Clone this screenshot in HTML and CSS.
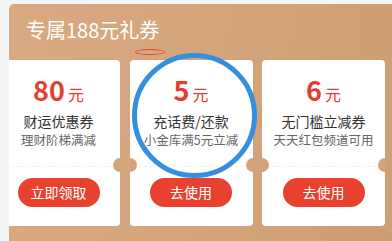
FILE: index.html
```html
<!DOCTYPE html>
<html lang="zh">
<head>
<meta charset="utf-8">
<link rel="stylesheet" href="styles.css">
</head>
<body>
<div class="page">
  <div class="panel">
    <div class="title">专属188元礼券</div>
    <div class="cards">
      <div class="card">
        <div class="amount"><span class="num">80</span><span class="unit">元</span></div>
        <div class="name">财运优惠券</div>
        <div class="desc">理财阶梯满减</div>
        <div class="divider"></div>
        <div class="btn">立即领取</div>
      </div>
      <div class="card">
        <div class="amount"><span class="num">5</span><span class="unit">元</span></div>
        <div class="name">充话费/还款</div>
        <div class="desc">小金库满5元立减</div>
        <div class="divider"></div>
        <div class="btn">去使用</div>
      </div>
      <div class="card">
        <div class="amount"><span class="num">6</span><span class="unit">元</span></div>
        <div class="name">无门槛立减券</div>
        <div class="desc">天天红包频道可用</div>
        <div class="divider"></div>
        <div class="btn">去使用</div>
      </div>
    </div>
  </div>
</div>
<div class="mark-red"></div>
<div class="mark-blue"></div>
</body>
</html>
```

FILE: styles.css
```css
html, body {
  margin: 0;
  padding: 0;
}
body {
  background: #f4f5f7;
  font-family: "Noto Sans CJK SC", "Noto Sans", sans-serif;
  width: 392px;
  height: 241px;
  overflow: hidden;
  position: relative;
}
.page {
  padding: 4px 0 0 9px;
}
.panel {
  background: linear-gradient(100deg, #d9aa82 0%, #d4a47b 50%, #cd9d74 100%);
  border-radius: 5px 0 0 0;
  height: 260px;
  overflow: hidden;
}
.title {
  color: #fff;
  font-size: 20px;
  line-height: 28px;
  padding: 12px 0 0 17px;
}
.cards {
  display: flex;
  gap: 9.5px;
  margin: 16px 0 0 -12px;
}
.card {
  flex: none;
  width: 123px;
  height: 166px;
  background: #fff;
  border-radius: 4px;
  position: relative;
  overflow: hidden;
  display: flex;
  flex-direction: column;
  align-items: center;
}
.card::before,
.card::after {
  content: "";
  position: absolute;
  top: 98px;
  width: 14px;
  height: 14px;
  border-radius: 50%;
  background: #d3a37a;
}
.card::before { left: -7px; }
.card::after { right: -7px; }
.amount {
  margin-top: 16px;
  height: 28px;
  display: flex;
  align-items: baseline;
  color: #e53d2e;
  line-height: 28px;
}
.num {
  font-size: 27px;
  font-weight: bold;
}
.unit {
  font-size: 16px;
  margin-left: 3px;
}
.name {
  margin-top: 8px;
  font-size: 14px;
  line-height: 18px;
  color: #333;
}
.desc {
  margin-top: 2px;
  font-size: 12.5px;
  line-height: 16px;
  color: #666;
}
.divider {
  margin-top: 18px;
  width: 104px;
  border-top: 1px dashed #f0f0f0;
}
.btn {
  margin-top: 11px;
  width: 82px;
  height: 29px;
  border-radius: 15px;
  background: #e8412f;
  color: #fff;
  font-size: 14px;
  line-height: 29px;
  text-align: center;
}
.mark-red {
  position: absolute;
  left: 135px;
  top: 49px;
  width: 28px;
  height: 4px;
  border: 1px solid #e8453a;
  border-radius: 50%;
}
.mark-blue {
  position: absolute;
  left: 132px;
  top: 53px;
  width: 115px;
  height: 115px;
  border: 5px solid #358ee0;
  border-radius: 50%;
}
```
